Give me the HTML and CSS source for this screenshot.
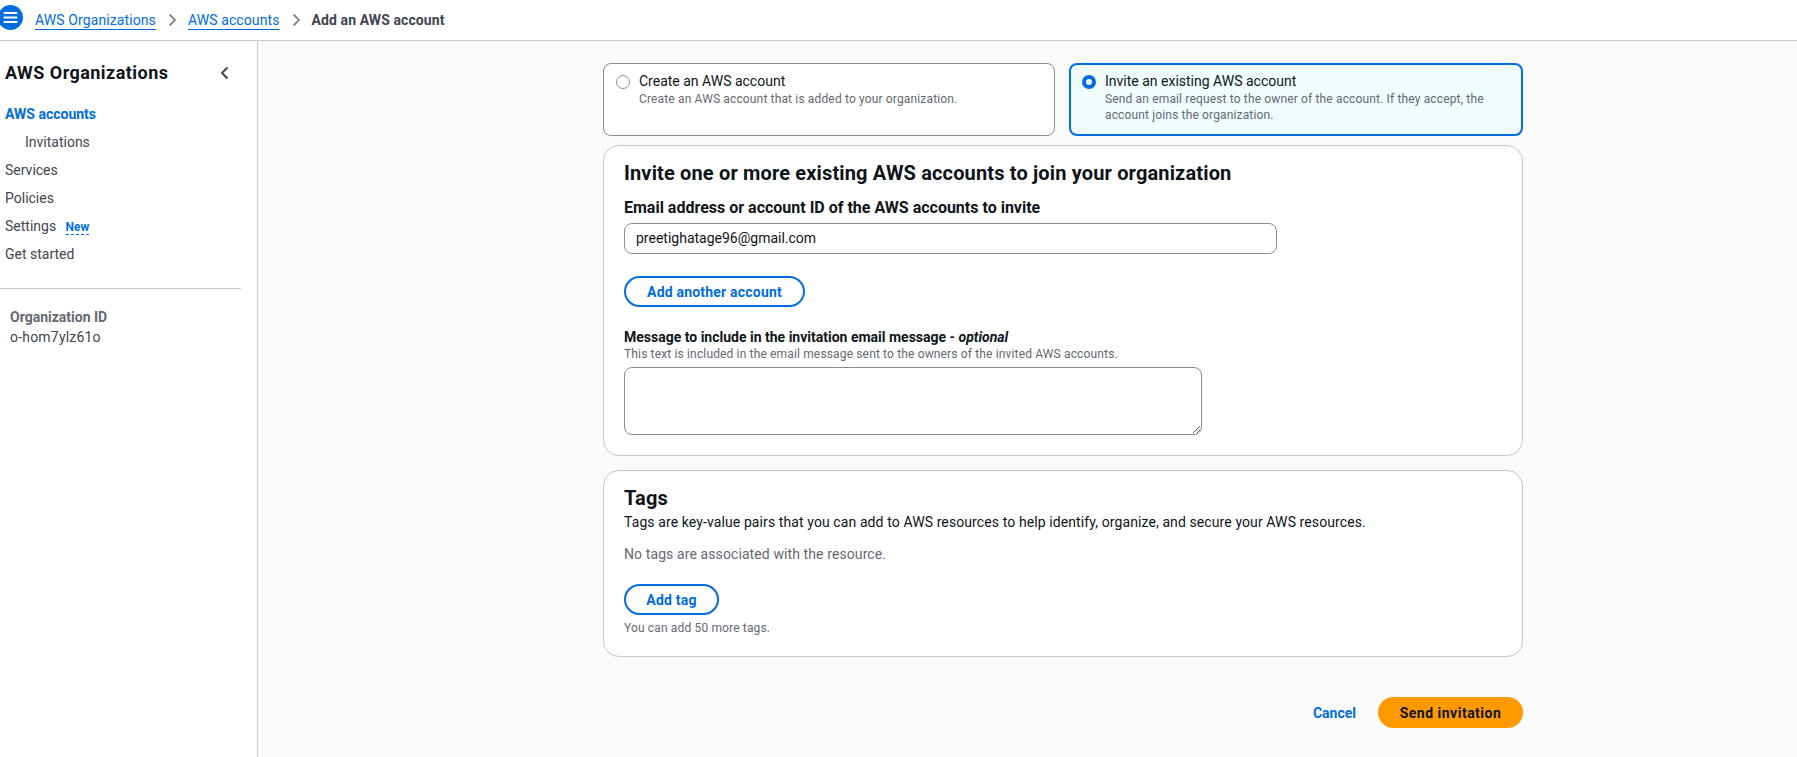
FILE: index.html
```html
<!DOCTYPE html>
<html lang="en">
<head>
<meta charset="utf-8">
<title>Add an AWS account</title>
<link rel="stylesheet" href="styles.css">
</head>
<body>
<header class="topbar">
  <span class="menu-btn" aria-label="Open navigation">
    <svg width="25" height="25" viewBox="0 0 25 25"><circle cx="12.5" cy="12.5" r="12.5" fill="#006ce0"/><path d="M6.5 8h12M6.5 12.5h12M6.5 17h12" stroke="#fff" stroke-width="2.2" stroke-linecap="round"/></svg>
  </span>
  <nav class="crumbs">
    <a class="crumb-link" href="#">AWS Organizations</a>
    <svg class="crumb-sep" width="16" height="16" viewBox="0 0 16 16"><path d="M5.5 2.5l5.5 5.5-5.5 5.5" fill="none" stroke="#8c8c94" stroke-width="2" stroke-linejoin="round"/></svg>
    <a class="crumb-link" href="#">AWS accounts</a>
    <svg class="crumb-sep" width="16" height="16" viewBox="0 0 16 16"><path d="M5.5 2.5l5.5 5.5-5.5 5.5" fill="none" stroke="#8c8c94" stroke-width="2" stroke-linejoin="round"/></svg>
    <span class="crumb-current">Add an AWS account</span>
  </nav>
</header>
<div class="layout">
  <aside class="sidenav">
    <div class="side-head">
      <h2 class="side-title">AWS Organizations</h2>
      <svg class="side-close" width="16" height="16" viewBox="0 0 16 16"><path d="M10.5 2.5L5 8l5.5 5.5" fill="none" stroke="#424650" stroke-width="2" stroke-linejoin="round"/></svg>
    </div>
    <ul class="nav-list">
      <li class="nav-item active">AWS accounts</li>
      <li class="nav-item sub">Invitations</li>
      <li class="nav-item">Services</li>
      <li class="nav-item">Policies</li>
      <li class="nav-item">Settings <span class="badge-new">New</span></li>
      <li class="nav-item">Get started</li>
    </ul>
    <div class="side-divider"></div>
    <div class="org">
      <div class="org-label">Organization ID</div>
      <div class="org-id">o-hom7ylz61o</div>
    </div>
  </aside>
  <main class="main">
    <div class="content">
      <div class="tiles">
        <label class="tile">
          <span class="radio"></span>
          <span class="tile-text">
            <span class="tile-title">Create an AWS account</span>
            <span class="tile-desc">Create an AWS account that is added to your organization.</span>
          </span>
        </label>
        <label class="tile selected">
          <span class="radio checked"></span>
          <span class="tile-text">
            <span class="tile-title">Invite an existing AWS account</span>
            <span class="tile-desc">Send an email request to the owner of the account. If they accept, the account joins the organization.</span>
          </span>
        </label>
      </div>

      <section class="panel">
        <h2 class="panel-title">Invite one or more existing AWS accounts to join your organization</h2>
        <div class="field">
          <div class="field-label field-label-lg">Email address or account ID of the AWS accounts to invite</div>
          <div class="input">preetighatage96@gmail.com</div>
        </div>
        <button class="btn-normal btn-add-account">Add another account</button>
        <div class="field field-msg">
          <div class="field-label">Message to include in the invitation email message - <em>optional</em></div>
          <div class="field-desc">This text is included in the email message sent to the owners of the invited AWS accounts.</div>
          <textarea class="textarea"></textarea>
        </div>
      </section>

      <section class="panel panel-tags">
        <h2 class="panel-title">Tags</h2>
        <p class="tags-desc">Tags are key-value pairs that you can add to AWS resources to help identify, organize, and secure your AWS resources.</p>
        <p class="tags-empty">No tags are associated with the resource.</p>
        <button class="btn-normal btn-add-tag">Add tag</button>
        <div class="tags-hint">You can add 50 more tags.</div>
      </section>

      <div class="actions">
        <button class="btn-link">Cancel</button>
        <button class="btn-primary">Send invitation</button>
      </div>
    </div>
  </main>
</div>
</body>
</html>
```
FILE: styles.css
```css
* { box-sizing: border-box; }
html, body { margin: 0; padding: 0; }
body {
  font-family: Roboto, "Liberation Sans", Arial, sans-serif;
  font-size: 14px;
  line-height: 20px;
  color: #0f141a;
  background: #fafafa;
  width: 1797px;
  height: 757px;
  overflow: hidden;
}

/* top bar */
.topbar {
  height: 41px;
  display: flex;
  align-items: flex-start;
  background: #fff;
  border-bottom: 1px solid #c6c6cd;
}
.menu-btn {
  display: block;
  margin: 5px 0 0 -2px;
  width: 25px;
  height: 25px;
}
.menu-btn svg { display: block; }
.crumbs {
  display: flex;
  align-items: center;
  margin-left: 12px;
  height: 40px;
}
.crumb-link {
  color: #006ce0;
  text-decoration: underline;
  text-underline-offset: 4px;
  letter-spacing: 0.1px;
}
.crumb-sep { margin: 0 8px; display: block; }
.crumb-current { color: #424650; font-weight: 700; letter-spacing: 0.1px; }

/* layout */
.layout {
  display: flex;
  height: 716px;
}
.sidenav {
  width: 258px;
  flex: none;
  background: #fff;
  border-right: 1px solid #c6c6cd;
}
.side-head {
  display: flex;
  align-items: center;
  justify-content: space-between;
  padding: 21px 24px 0 5px;
}
.side-title {
  margin: 0;
  font-size: 18px;
  line-height: 22px;
  font-weight: 700;
  letter-spacing: 0.45px;
}
.side-close { display: block; }
.nav-list {
  list-style: none;
  margin: 16px 0 0;
  padding: 0;
}
.nav-item {
  padding: 4px 0 4px 5px;
  color: #424650;
}
.nav-item.active { color: #006ce0; font-weight: 700; }
.nav-item.sub { padding-left: 25px; }
.badge-new {
  margin-left: 6px;
  color: #006ce0;
  font-size: 12px;
  font-weight: 700;
  border-bottom: 1px dashed #006ce0;
  line-height: 14px;
}
.side-divider {
  margin: 20px 16px 0 0;
  border-top: 1px solid #c6c6cd;
}
.org { padding: 19px 0 0 10px; }
.org-label {
  color: #656871;
  font-weight: 700;
  line-height: 18px;
}
.org-id { color: #424650; margin-top: 1px; letter-spacing: 0.2px; }

/* main */
.main {
  flex: 1;
  padding: 22px 0 0 345px;
}
.content { width: 920px; }

.tiles {
  display: grid;
  grid-template-columns: 452px 454px;
  gap: 14px;
}
.tile {
  display: flex;
  gap: 9px;
  min-height: 73px;
  padding: 7px 12px 8px;
  border: 1px solid #8c8c94;
  border-radius: 8px;
  background: #fff;
}
.tile.selected {
  border: 2px solid #006ce0;
  background: #f0fbff;
  padding: 6px 11px 7px;
}
.radio {
  flex: none;
  width: 14px;
  height: 14px;
  margin-top: 4px;
  border: 1px solid #8c8c94;
  border-radius: 50%;
  background: #fff;
}
.radio.checked { border: 4px solid #006ce0; }
.tile-text { display: flex; flex-direction: column; }
.tile-title { line-height: 20px; }
.tile-desc { font-size: 12px; line-height: 16px; color: #656871; letter-spacing: 0.15px; }

.panel {
  margin-top: 9px;
  background: #fff;
  border: 1px solid #c6c6cd;
  border-radius: 16px;
  padding: 15px 20px 20px;
}
.panel-title {
  margin: 0;
  font-size: 20px;
  line-height: 24px;
  font-weight: 700;
  letter-spacing: 0.15px;
}
.field { margin-top: 13px; }
.field-label {
  font-weight: 700;
  line-height: 18px;
}
.field-label-lg {
  font-size: 16px;
  line-height: 20px;
}
.field-label em { font-style: italic; }
.field-desc {
  font-size: 12px;
  line-height: 16px;
  color: #656871;
  letter-spacing: 0.15px;
}
.input {
  margin-top: 5px;
  width: 653px;
  height: 31px;
  border: 1px solid #8c8c94;
  border-radius: 8px;
  padding: 4px 11px;
  line-height: 21px;
  background: #fff;
}
.btn-normal {
  display: block;
  font-family: inherit;
  font-size: 14px;
  font-weight: 700;
  line-height: 18px;
  color: #006ce0;
  background: #fff;
  border: 2px solid #006ce0;
  border-radius: 20px;
  padding: 5px 0;
  height: 31px;
  letter-spacing: 0.2px;
}
.btn-add-account { margin-top: 22px; width: 181px; }
.field-msg { margin-top: 21px; }
.textarea {
  display: block;
  margin-top: 5px;
  width: 578px;
  height: 68px;
  border: 1px solid #8c8c94;
  border-radius: 8px;
  background: #fff;
  font-family: inherit;
  font-size: 14px;
}

.panel-tags { margin-top: 14px; }
.tags-desc { margin: 2px 0 0; letter-spacing: 0.1px; }
.tags-empty { margin: 12px 0 0; color: #656871; letter-spacing: 0.1px; }
.btn-add-tag { margin-top: 20px; width: 95px; }
.tags-hint {
  margin-top: 5px;
  font-size: 12px;
  line-height: 16px;
  color: #656871;
  letter-spacing: 0.15px;
}

.actions {
  margin-top: 40px;
  display: flex;
  justify-content: flex-end;
  align-items: center;
  gap: 2px;
}
.btn-link {
  font-family: inherit;
  font-size: 14px;
  font-weight: 700;
  color: #006ce0;
  background: none;
  border: none;
  padding: 4px 20px;
}
.btn-primary {
  font-family: inherit;
  font-size: 14px;
  font-weight: 700;
  color: #0f141a;
  background: #ff9900;
  border: none;
  border-radius: 20px;
  width: 145px;
  height: 31px;
  padding: 0;
  letter-spacing: 0.5px;
}
```
